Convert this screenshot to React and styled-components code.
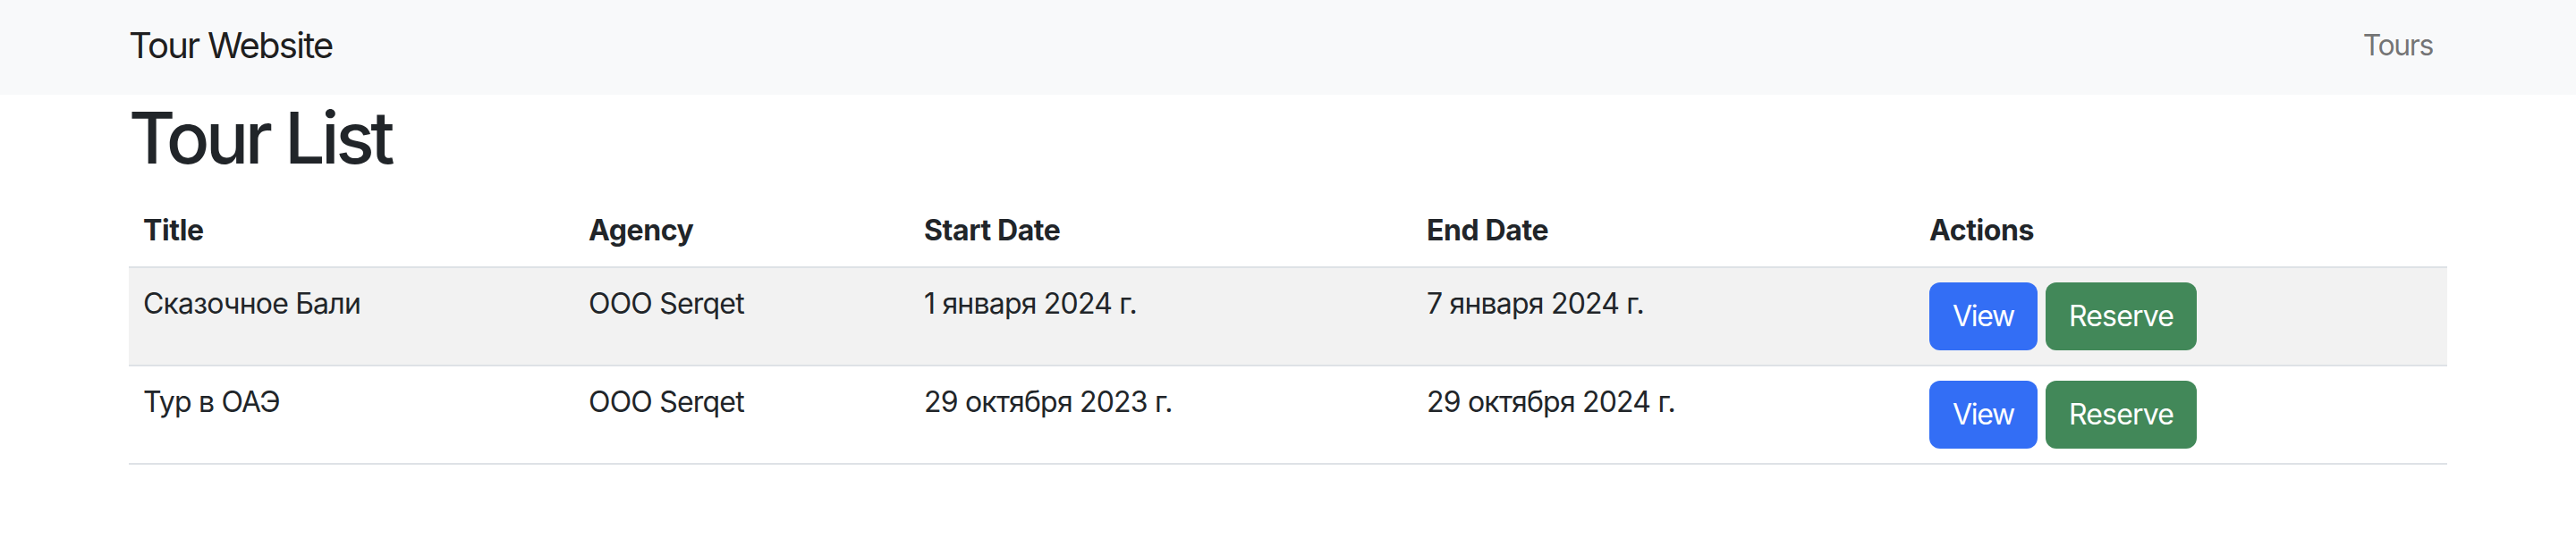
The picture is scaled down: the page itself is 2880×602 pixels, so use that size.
import React from 'react';
import styled, { createGlobalStyle } from 'styled-components';

const GlobalStyle = createGlobalStyle`
    body {
        margin: 0;
        background: #fff;
        color: #212529;
        font-family: Inter, "Noto Sans", "DejaVu Sans", sans-serif;
    }
`;

const Navbar = styled.nav`
    background: #f8f9fa;
    box-sizing: border-box;
    height: 106px;
    padding-bottom: 6px;
`;

const Container = styled.div`
    box-sizing: border-box;
    max-width: 2640px;
    margin: 0 auto;
    padding: 0 24px;
`;

const NavInner = styled(Container)`
    align-items: center;
    display: flex;
    height: 100%;
    justify-content: space-between;
`;

const Brand = styled.a`
    color: rgba(0, 0, 0, 0.9);
    font-size: 40px;
    letter-spacing: -1.75px;
    text-decoration: none;
`;

const NavLink = styled.a`
    color: rgba(0, 0, 0, 0.55);
    font-size: 32px;
    letter-spacing: -1.4px;
    padding: 0 16px;
    text-decoration: none;
`;

const Heading = styled.h1`
    font-size: 80px;
    font-weight: 500;
    letter-spacing: -4.1px;
    line-height: 96px;
    margin: 0 0 16px;
`;

const Table = styled.table`
    border-collapse: collapse;
    table-layout: fixed;
    width: 100%;
`;

const HeadCell = styled.th`
    border-bottom: 2px solid #dee2e6;
    font-size: 32px;
    font-weight: 700;
    letter-spacing: -0.4px;
    line-height: 48px;
    padding: 16px;
    text-align: left;
    vertical-align: top;
    width: ${p => p.$w}px;
`;

const Row = styled.tr`
    background: ${p => (p.$striped ? '#f2f2f2' : '#fff')};
`;

const Cell = styled.td`
    border-bottom: 2px solid #dee2e6;
    font-size: 32px;
    letter-spacing: -0.8px;
    line-height: 48px;
    padding: 16px;
    vertical-align: top;
`;

const Actions = styled.div`
    display: flex;
    gap: 9px;
`;

const Button = styled.button`
    background: ${p => (p.$variant === 'success' ? '#428859' : '#336ef5')};
    border: 2px solid transparent;
    border-radius: 12px;
    color: #fff;
    font-family: inherit;
    font-size: 32px;
    letter-spacing: ${p => (p.$variant === 'success' ? '-0.8px' : '-1.3px')};
    line-height: 48px;
    padding: 12px 24px;
`;

const columns = [
    { label: 'Title', width: 466 },
    { label: 'Agency', width: 343 },
    { label: 'Start Date', width: 530 },
    { label: 'End Date', width: 530 },
    { label: 'Actions', width: 563 },
];

const tours = [
    { id: 1, title: 'Сказочное Бали', agency: 'ООО Serqet', start: '1 января 2024 г.', end: '7 января 2024 г.' },
    { id: 2, title: 'Тур в ОАЭ', agency: 'ООО Serqet', start: '29 октября 2023 г.', end: '29 октября 2024 г.' },
];

export default function App() {
    return (
        <>
            <GlobalStyle />
            <Navbar>
                <NavInner>
                    <Brand href="#">Tour Website</Brand>
                    <NavLink href="#">Tours</NavLink>
                </NavInner>
            </Navbar>
            <Container>
                <Heading>Tour List</Heading>
                <Table>
                    <thead>
                        <tr>
                            {columns.map(c => (
                                <HeadCell key={c.label} $w={c.width}>{c.label}</HeadCell>
                            ))}
                        </tr>
                    </thead>
                    <tbody>
                        {tours.map((tour, i) => (
                            <Row key={tour.id} $striped={i % 2 === 0}>
                                <Cell>{tour.title}</Cell>
                                <Cell>{tour.agency}</Cell>
                                <Cell>{tour.start}</Cell>
                                <Cell>{tour.end}</Cell>
                                <Cell>
                                    <Actions>
                                        <Button>View</Button>
                                        <Button $variant="success">Reserve</Button>
                                    </Actions>
                                </Cell>
                            </Row>
                        ))}
                    </tbody>
                </Table>
            </Container>
        </>
    );
}
